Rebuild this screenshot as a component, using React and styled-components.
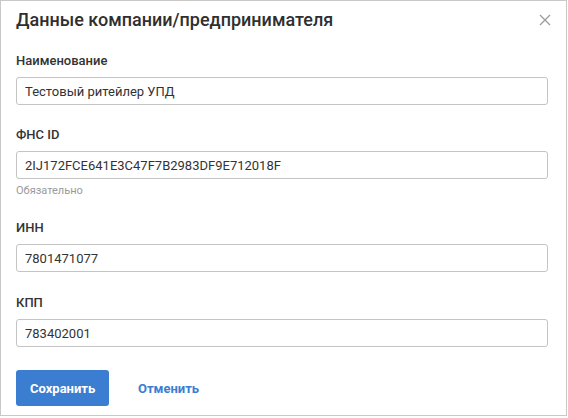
import React from "react";
import styled, { createGlobalStyle } from "styled-components";

const Global = createGlobalStyle`
  * { box-sizing: border-box; }
  html, body { margin: 0; padding: 0; background: #ffffff; }
  body { font-family: Roboto, "Liberation Sans", Arial, sans-serif; color: #333333; }
`;

const Dialog = styled.div`
  width: 567px;
  height: 416px;
  border: 1px solid #c8c8c8;
  background: #ffffff;
  padding: 7px 18px 0 15px;
  display: flex;
  flex-direction: column;
`;

const Header = styled.div`
  display: flex;
  align-items: center;
  justify-content: space-between;
  height: 24px;
  margin-bottom: 21px;
`;

const Title = styled.h2`
  margin: 0;
  font-size: 18px;
  line-height: 24px;
  font-weight: 500;
  color: #2f2f2f;
`;

const Close = styled.button`
  border: 0;
  background: none;
  padding: 0;
  width: 14px;
  height: 14px;
  margin-right: -4px;
  display: flex;
  align-items: center;
  justify-content: center;
  cursor: pointer;
`;

const Field = styled.div`
  display: flex;
  flex-direction: column;
  margin-bottom: ${(p) => (p.$tight ? "23px" : "22px")};
`;

const Label = styled.label`
  font-size: 13px;
  line-height: 16px;
  font-weight: 500;
  color: #333333;
  margin-bottom: 8px;
`;

const Input = styled.input`
  width: 532px;
  height: 28px;
  border: 1px solid #c4c4c4;
  border-radius: 3px;
  padding: 0 8px;
  font-family: inherit;
  font-size: 13px;
  color: #333333;
  background: #ffffff;
  outline: none;
`;

const Hint = styled.div`
  margin-top: 5px;
  font-size: 11px;
  line-height: 14px;
  color: #9a9a9a;
`;

const Footer = styled.div`
  display: flex;
  align-items: center;
  margin-top: 1px;
`;

const Button = styled.button`
  height: 36px;
  border-radius: 3px;
  border: 0;
  font-family: inherit;
  font-size: 13px;
  font-weight: 700;
  cursor: pointer;
  padding: 0 ${(p) => (p.$primary ? "14px" : "0")};
  width: ${(p) => (p.$primary ? "93px" : "auto")};
  margin-left: ${(p) => (p.$primary ? "0" : "29px")};
  background: ${(p) => (p.$primary ? "#3b7dd0" : "transparent")};
  color: ${(p) => (p.$primary ? "#ffffff" : "#3b7dd0")};
`;

const fields = [
  { label: "Наименование", value: "Тестовый ритейлер УПД" },
  { label: "ФНС ID", value: "2IJ172FCE641E3C47F7B2983DF9E712018F", hint: "Обязательно" },
  { label: "ИНН", value: "7801471077" },
  { label: "КПП", value: "783402001" },
];

export default function App() {
  return (
    <>
      <Global />
      <Dialog>
        <Header>
          <Title>Данные компании/предпринимателя</Title>
          <Close aria-label="Закрыть">
            <svg width="12" height="12" viewBox="0 0 12 12">
              <path d="M1 1 L11 11 M11 1 L1 11" stroke="#9e9e9e" strokeWidth="1.4" fill="none" />
            </svg>
          </Close>
        </Header>
        {fields.map((f, i) => (
          <Field key={f.label} $tight={i === 2}>
            <Label>{f.label}</Label>
            <Input defaultValue={f.value} />
            {f.hint && <Hint>{f.hint}</Hint>}
          </Field>
        ))}
        <Footer>
          <Button $primary>Сохранить</Button>
          <Button>Отменить</Button>
        </Footer>
      </Dialog>
    </>
  );
}
